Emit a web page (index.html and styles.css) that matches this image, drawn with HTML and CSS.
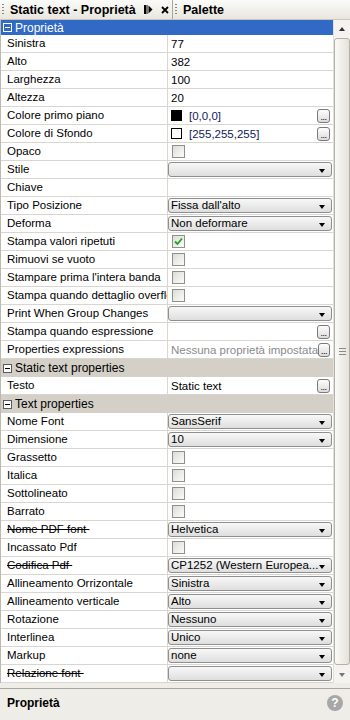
FILE: index.html
```html
<!DOCTYPE html>
<html>
<head>
<meta charset="utf-8">
<link rel="stylesheet" href="styles.css">
</head>
<body>
<div class="app">
  <div class="tabs">
    <div class="tab active">
      <span class="grip"></span>
      <span class="tab-title">Static text - Proprietà</span>
      <svg class="pin" width="9" height="9" viewBox="0 0 9 9"><rect x="0" y="0" width="2" height="9" fill="#000"/><rect x="2.5" y="0" width="1" height="9" fill="#000"/><path d="M4.5 0.5 L8.5 4.5 L4.5 8.5 Z" fill="#000"/></svg>
      <svg class="close" width="8" height="8" viewBox="0 0 8 8"><path d="M1 1 L7 7 M7 1 L1 7" stroke="#000" stroke-width="1.8"/></svg>
    </div>
    <div class="tab">
      <span class="grip"></span>
      <span class="tab-title">Palette</span>
    </div>
  </div>

  <div class="main">
    <div class="grid">
      <div class="section blue"><span class="minus"></span>Proprietà</div>
      <div class="row"><div class="label">Sinistra</div><div class="value">77</div></div>
      <div class="row"><div class="label">Alto</div><div class="value">382</div></div>
      <div class="row"><div class="label">Larghezza</div><div class="value">100</div></div>
      <div class="row"><div class="label">Altezza</div><div class="value">20</div></div>
      <div class="row"><div class="label">Colore primo piano</div><div class="value"><span class="swatch black"></span><span class="ctext">[0,0,0]</span><span class="dots">...</span></div></div>
      <div class="row"><div class="label">Colore di Sfondo</div><div class="value"><span class="swatch"></span><span class="ctext">[255,255,255]</span><span class="dots">...</span></div></div>
      <div class="row"><div class="label">Opaco</div><div class="value"><span class="check"></span></div></div>
      <div class="row"><div class="label">Stile</div><div class="value"><div class="combo"><span></span><i class="tri"></i></div></div></div>
      <div class="row"><div class="label">Chiave</div><div class="value"></div></div>
      <div class="row"><div class="label">Tipo Posizione</div><div class="value"><div class="combo"><span>Fissa dall'alto</span><i class="tri"></i></div></div></div>
      <div class="row"><div class="label">Deforma</div><div class="value"><div class="combo"><span>Non deformare</span><i class="tri"></i></div></div></div>
      <div class="row"><div class="label">Stampa valori ripetuti</div><div class="value"><span class="check on"><svg width="9" height="9" viewBox="0 0 9 9"><path d="M1 4.5 L3.5 7 L8 1.5" stroke="#21a121" stroke-width="1.8" fill="none"/></svg></span></div></div>
      <div class="row"><div class="label">Rimuovi se vuoto</div><div class="value"><span class="check"></span></div></div>
      <div class="row"><div class="label">Stampare prima l'intera banda</div><div class="value"><span class="check"></span></div></div>
      <div class="row"><div class="label">Stampa quando dettaglio overflow</div><div class="value"><span class="check"></span></div></div>
      <div class="row"><div class="label">Print When Group Changes</div><div class="value"><div class="combo"><span></span><i class="tri"></i></div></div></div>
      <div class="row"><div class="label">Stampa quando espressione</div><div class="value"><span class="fill"></span><span class="dots">...</span></div></div>
      <div class="row"><div class="label">Properties expressions</div><div class="value"><span class="fill gray">Nessuna proprietà impostata</span><span class="dots">...</span></div></div>
      <div class="section gray"><span class="minus"></span>Static text properties</div>
      <div class="row"><div class="label">Testo</div><div class="value"><span class="fill">Static text</span><span class="dots">...</span></div></div>
      <div class="section gray"><span class="minus"></span>Text properties</div>
      <div class="row"><div class="label">Nome Font</div><div class="value"><div class="combo"><span>SansSerif</span><i class="tri"></i></div></div></div>
      <div class="row"><div class="label">Dimensione</div><div class="value"><div class="combo"><span>10</span><i class="tri"></i></div></div></div>
      <div class="row"><div class="label">Grassetto</div><div class="value"><span class="check"></span></div></div>
      <div class="row"><div class="label">Italica</div><div class="value"><span class="check"></span></div></div>
      <div class="row"><div class="label">Sottolineato</div><div class="value"><span class="check"></span></div></div>
      <div class="row"><div class="label">Barrato</div><div class="value"><span class="check"></span></div></div>
      <div class="row"><div class="label"><span class="strike">Nome PDF font&nbsp;</span></div><div class="value"><div class="combo"><span>Helvetica</span><i class="tri"></i></div></div></div>
      <div class="row"><div class="label">Incassato Pdf</div><div class="value"><span class="check"></span></div></div>
      <div class="row"><div class="label"><span class="strike">Codifica Pdf&nbsp;</span></div><div class="value"><div class="combo"><span>CP1252 (Western Europea...</span><i class="tri"></i></div></div></div>
      <div class="row"><div class="label">Allineamento Orrizontale</div><div class="value"><div class="combo"><span>Sinistra</span><i class="tri"></i></div></div></div>
      <div class="row"><div class="label">Allineamento verticale</div><div class="value"><div class="combo"><span>Alto</span><i class="tri"></i></div></div></div>
      <div class="row"><div class="label">Rotazione</div><div class="value"><div class="combo"><span>Nessuno</span><i class="tri"></i></div></div></div>
      <div class="row"><div class="label">Interlinea</div><div class="value"><div class="combo"><span>Unico</span><i class="tri"></i></div></div></div>
      <div class="row"><div class="label">Markup</div><div class="value"><div class="combo"><span>none</span><i class="tri"></i></div></div></div>
      <div class="row"><div class="label"><span class="strike">Relazione font&nbsp;</span></div><div class="value"><div class="combo"><span></span><i class="tri"></i></div></div></div>
    </div>
    <div class="scrollbar">
      <div class="arrow up"></div>
      <div class="thumb"><span class="grips"></span></div>
      <div class="arrow down"></div>
    </div>
  </div>

  <div class="footer">
    <div class="foot-head">
      <span class="foot-title">Proprietà</span>
      <span class="help">?</span>
    </div>
    <div class="foot-desc">Proprietà di questo oggetto</div>
  </div>
</div>
</body>
</html>
```

FILE: styles.css
```css
* { box-sizing: border-box; }
html, body { margin: 0; padding: 0; }
body {
  width: 350px;
  height: 720px;
  overflow: hidden;
  font-family: "Liberation Sans", Arial, sans-serif;
  font-size: 11.5px;
  color: #000;
  background: #eeede7;
}
.app { display: flex; flex-direction: column; height: 720px; }

/* tabs */
.tabs {
  display: flex;
  height: 20px;
  background: linear-gradient(#fbfbf9, #e8e6de);
  border-bottom: 1px solid #c9c6bc;
}
.tab {
  display: flex;
  align-items: center;
  height: 19px;
  padding-left: 2px;
}
.tab.active {
  width: 173px;
  border-right: 1px solid #a9a69c;
}
.grip {
  width: 2px;
  height: 12px;
  margin-right: 6px;
  background: repeating-linear-gradient(#8a877d 0 1px, transparent 1px 3px);
}
.tab-title { font-weight: bold; font-size: 12.5px; }
.tab.active .tab-title { flex: 1; }
.pin { margin-right: 8px; }
.close { margin-right: 3px; }

/* main */
.main { display: flex; }
.grid {
  width: 333px;
  background: #fff;
  border-left: 1px solid #bcb9ae;
}
.section {
  display: flex;
  align-items: center;
  height: 18px;
  padding-left: 2px;
  font-size: 12px;
}
.section.blue {
  height: 15px;
  background: #316ac5;
  color: #fff;
}
.section.gray {
  background: #d4d0c8;
  color: #000;
}
.minus {
  position: relative;
  width: 9px;
  height: 9px;
  margin-right: 3px;
  border: 1px solid #5c5c5c;
  background: #fff;
}
.section.blue .minus { border-color: #fff; background: #316ac5; }
.minus::after {
  content: "";
  position: absolute;
  left: 1px;
  top: 3px;
  width: 5px;
  height: 1px;
  background: #000;
}
.section.blue .minus::after { background: #fff; }

.row {
  display: flex;
  height: 18px;
  border-bottom: 1px solid #d8d6cf;
}
.label {
  width: 167px;
  flex: none;
  padding-left: 6px;
  line-height: 17px;
  white-space: nowrap;
  overflow: hidden;
  text-overflow: clip;
  border-right: 1px solid #d8d6cf;
}
.value {
  flex: 1;
  display: flex;
  align-items: center;
  padding-left: 3px;
  padding-right: 2px;
  white-space: nowrap;
  overflow: hidden;
}
.strike { text-decoration: line-through; }
.fill { flex: 1; }
.fill.gray { color: #8a8a8a; }

.swatch {
  width: 11px;
  height: 11px;
  border: 1px solid #000;
  background: #fff;
  margin-right: 7px;
}
.swatch.black { background: #000; }
.ctext { flex: 1; color: #111a5c; }

.dots {
  width: 13px;
  height: 14px;
  border: 1px solid #7a7a7a;
  border-radius: 3px;
  background: linear-gradient(#fdfdfd, #dcdcdc);
  font-size: 9px;
  line-height: 14px;
  text-align: center;
  letter-spacing: -0.5px;
  margin-right: 1px;
}

.check {
  display: flex;
  align-items: center;
  justify-content: center;
  width: 13px;
  height: 13px;
  margin-left: 1px;
  border: 1px solid #8e8f8f;
  background: linear-gradient(135deg, #dcdcd7, #fbfbfa);
}

.combo {
  flex: 1;
  display: flex;
  align-items: center;
  height: 15px;
  margin-left: -3px;
  margin-right: -1px;
  margin-bottom: 1px;
  padding-left: 2px;
  padding-right: 6px;
  border: 1px solid #8f8f8f;
  border-radius: 3px;
  background: linear-gradient(#f8f8f8, #dedede);
}
.combo span { flex: 1; overflow: hidden; }
.tri {
  width: 0;
  height: 0;
  margin-top: 3px;
  border-left: 3.5px solid transparent;
  border-right: 3.5px solid transparent;
  border-top: 4px solid #000;
}

/* scrollbar */
.scrollbar {
  width: 17px;
  display: flex;
  flex-direction: column;
  background: #f4f3ef;
  border-left: 1px solid #e2e0d9;
  height: 663px;
}
.arrow {
  height: 17px;
  display: flex;
  align-items: center;
  justify-content: center;
}
.arrow::after {
  content: "";
  border-left: 3.5px solid transparent;
  border-right: 3.5px solid transparent;
}
.arrow.up::after { border-bottom: 4px solid #333; }
.arrow.down::after { border-top: 4px solid #777; }
.thumb {
  flex: 1;
  margin: 1px 0;
  border: 1px solid #b2b0a8;
  border-radius: 3px;
  background: linear-gradient(90deg, #fafaf8, #e4e2da);
  display: flex;
  align-items: center;
  justify-content: center;
}
.grips {
  width: 7px;
  height: 7px;
  background: repeating-linear-gradient(#8c8a82 0 1px, transparent 1px 3px);
}

/* footer */
.footer {
  margin-top: 5px;
  border-top: 1px solid #a8a69e;
  background: #eeede7;
  padding: 0 7px;
  flex: 1;
}
.foot-head {
  display: flex;
  align-items: center;
  justify-content: space-between;
  height: 28px;
}
.foot-title { font-weight: bold; font-size: 12px; }
.help {
  width: 16px;
  height: 16px;
  border-radius: 50%;
  background: #a7a7a7;
  color: #fff;
  font-weight: bold;
  font-size: 12px;
  text-align: center;
  line-height: 16px;
}
.foot-desc { padding-top: 5px; }
```
